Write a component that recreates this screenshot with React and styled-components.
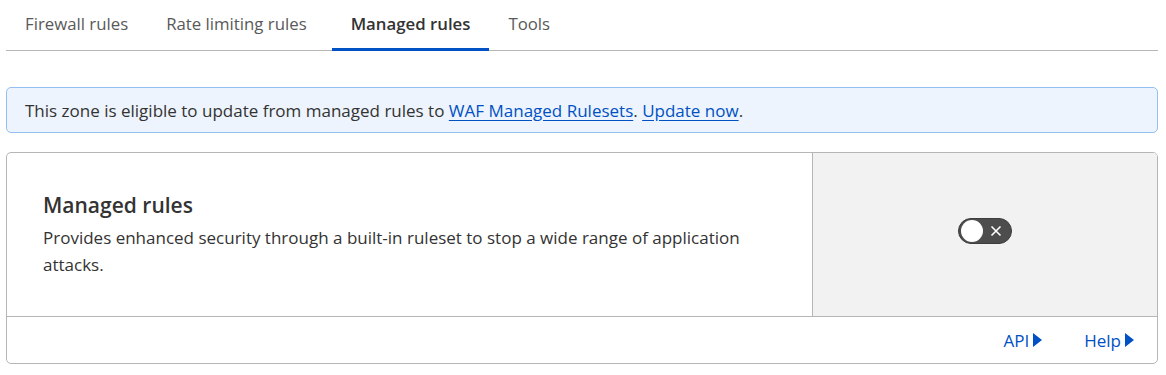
import React from "react";
import styled, { createGlobalStyle } from "styled-components";

const textColor = "#333333";
const mutedColor = "#595959";
const linkColor = "#0051c3";
const borderColor = "#b6b6b6";

const GlobalStyle = createGlobalStyle`
  body {
    margin: 0;
    background: #ffffff;
    font-family: "Open Sans", "Noto Sans", sans-serif;
    color: ${textColor};
  }
`;

const Page = styled.div`
  padding: 0 8px 0 6px;
`;

const TabBar = styled.div`
  display: flex;
  height: 50px;
  border-bottom: 1px solid ${borderColor};
`;

const Tab = styled.div`
  display: flex;
  align-items: center;
  padding: 0 19px 1px;
  margin-right: ${(p) => p.extra || 0}px;
  margin-bottom: -1px;
  font-size: 16.8px;
  font-weight: ${(p) => (p.active ? 600 : 400)};
  color: ${(p) => (p.active ? textColor : mutedColor)};
  border-bottom: 3px solid ${(p) => (p.active ? linkColor : "transparent")};
`;

const Banner = styled.div`
  margin-top: 36px;
  height: 46px;
  box-sizing: border-box;
  display: flex;
  align-items: center;
  padding: 0 18px;
  background: #edf4fd;
  border: 1px solid #93c0f0;
  border-radius: 5px;
  font-size: 17px;
  color: ${textColor};
`;

const Link = styled.a`
  color: ${linkColor};
  text-decoration: underline;
  text-underline-offset: 3px;
`;

const Card = styled.div`
  margin-top: 19px;
  border: 1px solid ${borderColor};
  border-radius: 5px;
  overflow: hidden;
`;

const CardBody = styled.div`
  display: flex;
  height: 163px;
  border-bottom: 1px solid ${borderColor};
`;

const Info = styled.div`
  flex: 1;
  display: flex;
  flex-direction: column;
  justify-content: center;
  padding: 0 36px;
`;

const Title = styled.h2`
  margin: 0 0 5px;
  font-size: 21px;
  font-weight: 600;
  color: ${textColor};
`;

const Description = styled.p`
  margin: 0;
  font-size: 17px;
  line-height: 27px;
  color: ${textColor};
  max-width: 720px;
`;

const Side = styled.div`
  width: 344px;
  border-left: 1px solid ${borderColor};
  background: #f2f2f2;
  display: flex;
  align-items: center;
  justify-content: center;
  padding-bottom: 8px;
`;

const Toggle = styled.div`
  width: 54px;
  height: 26px;
  box-sizing: border-box;
  border-radius: 13px;
  background: #4d4d4d;
  border: 1px solid #3d3d3d;
  display: flex;
  align-items: center;
  justify-content: space-between;
  padding: 0 9px 0 2px;
`;

const Knob = styled.span`
  width: 22px;
  height: 22px;
  border-radius: 50%;
  background: #ffffff;
`;

const Footer = styled.div`
  display: flex;
  justify-content: flex-end;
  align-items: center;
  gap: 42px;
  height: 46px;
  padding: 0 23px;
`;

const FooterLink = styled.a`
  display: flex;
  align-items: center;
  gap: 4px;
  color: ${linkColor};
  font-size: 17px;
  text-decoration: none;
`;

const Caret = () => (
  <svg width="9" height="14" viewBox="0 0 9 14">
    <path d="M0 0 L9 7 L0 14 Z" fill={linkColor} />
  </svg>
);

const Cross = () => (
  <svg width="12" height="12" viewBox="0 0 12 12">
    <path d="M1.5 1.5 L10.5 10.5 M10.5 1.5 L1.5 10.5" stroke="#ffffff" strokeWidth="1.6" />
  </svg>
);

export default () => {
  return (
    <Page>
      <GlobalStyle />
      <TabBar>
        <Tab>Firewall rules</Tab>
        <Tab extra={6}>Rate limiting rules</Tab>
        <Tab active>Managed rules</Tab>
        <Tab>Tools</Tab>
      </TabBar>
      <Banner>
        This zone is eligible to update from managed rules to&nbsp;
        <Link>WAF Managed Rulesets</Link>.&nbsp;<Link>Update now</Link>.
      </Banner>
      <Card>
        <CardBody>
          <Info>
            <Title>Managed rules</Title>
            <Description>
              Provides enhanced security through a built-in ruleset to stop a
              wide range of application attacks.
            </Description>
          </Info>
          <Side>
            <Toggle>
              <Knob />
              <Cross />
            </Toggle>
          </Side>
        </CardBody>
        <Footer>
          <FooterLink>
            API <Caret />
          </FooterLink>
          <FooterLink>
            Help <Caret />
          </FooterLink>
        </Footer>
      </Card>
    </Page>
  );
};
